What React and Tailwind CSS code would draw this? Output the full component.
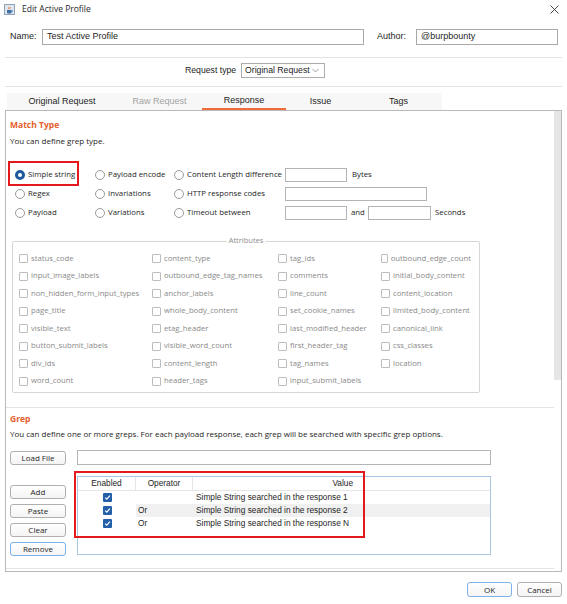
import React from 'react'

const SEG = "font-['Open_Sans','Noto_Sans',sans-serif]"
const ARIAL = "font-['Liberation_Sans',Arial,sans-serif]"

const attributes = [
    'status_code', 'content_type', 'tag_ids', 'outbound_edge_count',
    'input_image_labels', 'outbound_edge_tag_names', 'comments', 'initial_body_content',
    'non_hidden_form_input_types', 'anchor_labels', 'line_count', 'content_location',
    'page_title', 'whole_body_content', 'set_cookie_names', 'limited_body_content',
    'visible_text', 'etag_header', 'last_modified_header', 'canonical_link',
    'button_submit_labels', 'visible_word_count', 'first_header_tag', 'css_classes',
    'div_ids', 'content_length', 'tag_names', 'location',
    'word_count', 'header_tags', 'input_submit_labels', '',
]

const colWidths = ['w-[133px]', 'w-[126px]', 'w-[103px]', 'w-[90px]']

const greps = [
    { op: '', value: 'Simple String searched in the response 1' },
    { op: 'Or', value: 'Simple String searched in the response 2', selected: true },
    { op: 'Or', value: 'Simple String searched in the response N' },
]

const JavaIcon = () => (
    <svg width="11" height="11" viewBox="0 0 11 11">
        <rect x="0.5" y="0.5" width="10" height="10" fill="#dfe6ee" stroke="#8ea3b8" />
        <path d="M3 6h4.5v2.2c0 .8-.6 1.3-1.3 1.3H4.3C3.6 9.5 3 9 3 8.2z" fill="#3d6fa8" />
        <path d="M7.5 6.6h.7c.6 0 .6 1.2 0 1.2h-.7" fill="none" stroke="#3d6fa8" strokeWidth="0.7" />
        <path d="M4.6 5.3c-.6-.8.8-1.3.1-2.4M6 5.3c-.6-.8.8-1.3.1-2.4" fill="none" stroke="#e2722c" strokeWidth="0.8" />
    </svg>
)

const Radio = ({ checked, label }) => (
    <div className="flex items-center">
        {checked ? (
            <span className="w-[10px] h-[10px] rounded-full border-[3px] border-[#1f5b9c] bg-white" />
        ) : (
            <span className="w-[10px] h-[10px] rounded-full border border-[#9a9a9a] bg-white" />
        )}
        <span className={`ml-[3px] text-[7.8px] whitespace-nowrap text-[#1e1e1e] ${SEG}`}>{label}</span>
    </div>
)

const Field = ({ className }) => (
    <div className={`h-[14px] border border-[#b4b4b4] bg-white ${className}`} />
)

const Btn = ({ children, className = '', focus }) => (
    <div
        className={`flex items-center justify-center h-[14px] rounded-[3px] border bg-gradient-to-b from-white to-[#f4f4f4] text-[8px] text-[#1e1e1e] ${SEG} ${focus ? 'border-[#7cb2e8]' : 'border-[#b0b0b0]'} ${className}`}
    >
        {children}
    </div>
)

const BlueCheck = () => (
    <span className="w-[9px] h-[9px] rounded-[1px] bg-[#2360a8] flex items-center justify-center">
        <svg width="7" height="7" viewBox="0 0 7 7">
            <path d="M1.2 3.6 2.8 5.2 5.9 1.6" fill="none" stroke="white" strokeWidth="1.2" />
        </svg>
    </span>
)

export default function App() {
    return (
        <div className={`w-[567px] h-[604px] bg-white overflow-hidden text-[#1e1e1e] ${ARIAL}`}>
            {/* title bar */}
            <div className="h-[19px] flex items-center pl-[4px] pr-[8px]">
                <JavaIcon />
                <span className={`ml-[7px] text-[8.5px] ${SEG}`}>Edit Active Profile</span>
                <svg className="ml-auto" width="9" height="9" viewBox="0 0 9 9">
                    <path d="M.5.5l8 8M8.5.5l-8 8" stroke="#333" strokeWidth="0.9" />
                </svg>
            </div>

            {/* name / author */}
            <div className="mt-[10px] h-[16px] flex items-center pl-[10px] text-[9px]">
                <span className="w-[32px]">Name:</span>
                <div className="w-[322px] h-[16px] border border-[#a9a9a9] flex items-center pl-[4px]">Test Active Profile</div>
                <span className="ml-[13px] w-[39px]">Author:</span>
                <div className="w-[142px] h-[16px] border border-[#a9a9a9] flex items-center pl-[4px]">@burpbounty</div>
            </div>

            <div className="mt-[12px] mx-[5px] h-px bg-[#e2e2e2]" />

            {/* request type */}
            <div className="mt-[5px] h-[15px] flex items-center pl-[185px] text-[8.7px]">
                <span className="w-[56px] whitespace-nowrap">Request type</span>
                <div className="w-[84px] h-[15px] border border-[#acacac] flex items-center pl-[3px] pr-[5px]">
                    <span className="whitespace-nowrap">Original Request</span>
                    <svg className="ml-auto" width="7" height="5" viewBox="0 0 7 5">
                        <path d="M.5 1l3 3 3-3" fill="none" stroke="#8c8c8c" strokeWidth="0.8" />
                    </svg>
                </div>
            </div>

            <div className="mt-[8px] mx-[5px] h-px bg-[#e2e2e2]" />

            {/* tabs */}
            <div className="mt-[6px] ml-[7px] w-[435px] h-[17px] bg-[#f7f7f7] flex text-[9px]">
                <div className="w-[110px] flex items-center justify-center">Original Request</div>
                <div className="w-[85px] flex items-center justify-center text-[#a3a3a3]">Raw Request</div>
                <div className="w-[84px] flex items-center justify-center border-b-2 border-[#ef6b3a]">Response</div>
                <div className="w-[69px] flex items-center justify-center">Issue</div>
                <div className="w-[87px] flex items-center justify-center">Tags</div>
            </div>

            {/* panel */}
            <div className="mx-[5px] h-[462px] border border-[#b9b9b9] flex">
                <div className="flex-1 flex flex-col">
                    <div className={`mt-[8px] h-[11px] leading-[11px] pl-[4px] text-[8.5px] font-bold text-[#e4602c] ${SEG}`}>Match Type</div>
                    <div className={`mt-[5px] h-[11px] leading-[11px] pl-[4px] text-[8px] ${SEG}`}>You can define grep type.</div>

                    {/* match type options */}
                    <div className="mt-[19px] pl-[9px] flex flex-col">
                        <div className="h-[19px] flex items-center">
                            <div className="w-[80px] relative">
                                <Radio checked label="Simple string" />
                                <div className="absolute left-[-7px] top-[-8px] w-[71px] h-[25px] border-2 border-[#e3191c]" />
                            </div>
                            <div className="w-[79px]"><Radio label="Payload encode" /></div>
                            <div className="w-[111px]"><Radio label="Content Length difference" /></div>
                            <Field className="w-[62px]" />
                            <span className={`ml-[5px] text-[7.8px] ${SEG}`}>Bytes</span>
                        </div>
                        <div className="h-[19px] flex items-center">
                            <div className="w-[80px]"><Radio label="Regex" /></div>
                            <div className="w-[79px]"><Radio label="Invariations" /></div>
                            <div className="w-[111px]"><Radio label="HTTP response codes" /></div>
                            <Field className="w-[142px]" />
                        </div>
                        <div className="h-[19px] flex items-center">
                            <div className="w-[80px]"><Radio label="Payload" /></div>
                            <div className="w-[79px]"><Radio label="Variations" /></div>
                            <div className="w-[111px]"><Radio label="Timeout between" /></div>
                            <Field className="w-[62px]" />
                            <span className={`w-[21px] pl-[4px] text-[7.8px] ${SEG}`}>and</span>
                            <Field className="w-[63px]" />
                            <span className={`ml-[4px] text-[7.8px] ${SEG}`}>Seconds</span>
                        </div>
                    </div>

                    {/* attributes */}
                    <div className="mt-[19px] ml-[6px] w-[468px] h-[152px] border border-[#d6d6d6] rounded-[2px] relative">
                        <span className={`absolute left-1/2 -translate-x-1/2 top-[-7px] px-[2px] bg-white text-[7.5px] text-[#8c8c8c] ${SEG}`}>Attributes</span>
                        <div className="pt-[8px] pl-[6px] flex flex-wrap">
                            {attributes.map((name, i) => (
                                <div key={i} className={`h-[17.5px] flex items-center ${colWidths[i % 4]}`}>
                                    {name && (
                                        <>
                                            <span className="w-[9px] h-[9px] border border-[#bdbdbd] rounded-[1px] bg-white" />
                                            <span className={`ml-[3px] text-[7.7px] text-[#8a8a8a] ${SEG}`}>{name}</span>
                                        </>
                                    )}
                                </div>
                            ))}
                        </div>
                    </div>

                    <div className="mt-[14px] h-px bg-[#e4e4e4]" />

                    {/* grep */}
                    <div className={`mt-[5px] h-[11px] leading-[11px] pl-[4px] text-[8.5px] font-bold text-[#e4602c] ${SEG}`}>Grep</div>
                    <div className={`mt-[4px] h-[11px] leading-[11px] pl-[4px] text-[8px] ${SEG}`}>
                        You can define one or more greps. For each payload response, each grep will be searched with specific grep options.
                    </div>

                    <div className="mt-[11px] h-[15px] flex items-center pl-[4px]">
                        <Btn className="w-[56px]">Load File</Btn>
                        <div className="ml-[11px] w-[414px] h-[15px] border border-[#b4b4b4]" />
                    </div>

                    <div className="mt-[11px] flex pl-[4px]">
                        <div className="w-[56px] pt-[9px] flex flex-col gap-[5px]">
                            <Btn>Add</Btn>
                            <Btn>Paste</Btn>
                            <Btn>Clear</Btn>
                            <Btn focus>Remove</Btn>
                        </div>
                        <div className="ml-[11px] w-[414px] h-[79px] border border-[#a9c6e4] relative text-[8.3px]">
                            <div className="h-[14px] flex border-b border-[#e6e6e6]">
                                <div className="w-[58px] flex items-center justify-center border-r border-[#e6e6e6]">Enabled</div>
                                <div className="w-[57px] flex items-center justify-center border-r border-[#e6e6e6]">Operator</div>
                                <div className="w-[165px] flex items-center justify-end pr-[5px]">Value</div>
                            </div>
                            {greps.map((g, i) => (
                                <div key={i} className="h-[13px] flex">
                                    <div className="w-[58px] flex items-center justify-center"><BlueCheck /></div>
                                    <div className={`flex-1 flex ${g.selected ? 'bg-[#f0f0f0]' : ''}`}>
                                        <div className="w-[57px] flex items-center pl-[2px]">{g.op}</div>
                                        <div className="flex items-center pl-[3px]">{g.value}</div>
                                    </div>
                                </div>
                            ))}
                            <div className="absolute left-[-4px] top-[-6px] w-[291px] h-[67px] border-2 border-[#e3191c]" />
                        </div>
                    </div>

                    <div className="mt-[12px] h-px bg-[#e4e4e4]" />
                </div>

                {/* scrollbar */}
                <div className="w-[7px] flex flex-col">
                    <div className="h-[269px] bg-[#e6e6e6]" />
                </div>
            </div>

            {/* dialog buttons */}
            <div className="mt-[10px] flex justify-end gap-[5px] pr-[5px]">
                <Btn focus className="w-[45px] h-[15px]">OK</Btn>
                <Btn className="w-[45px] h-[15px]">Cancel</Btn>
            </div>
        </div>
    )
}
